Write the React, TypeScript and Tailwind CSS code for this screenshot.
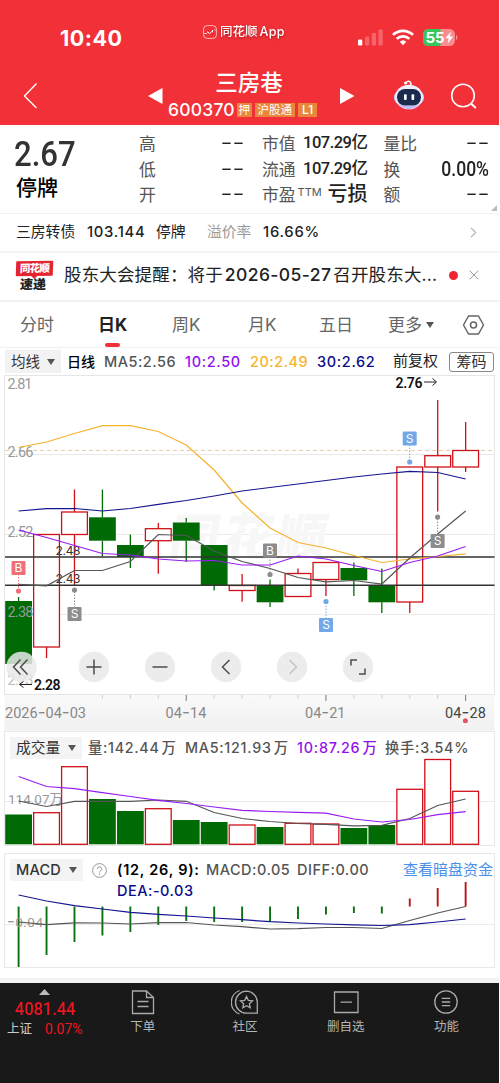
import React from "react";
import { ChevronRight, X } from "lucide-react";

const RED = "#d01018";
const GREEN = "#006b05";
const STEP = 27.94;
const px = (i: number) => 18.6 + i * STEP;

interface Candle {
  top: number;
  bottom: number;
  high: number;
  low: number;
  up: boolean;
}

const candle = (
  top: number,
  bottom: number,
  high: number,
  low: number,
  up: boolean
): Candle => ({ top, bottom, high, low, up });

const candles: Candle[] = [
  candle(601, 664, 597, 664, false),
  candle(534.5, 647, 534.5, 658, true),
  candle(512, 534.5, 489.5, 585, true),
  candle(517.3, 540.7, 489.5, 556.5, false),
  candle(545, 557, 534.5, 568, false),
  candle(528.7, 540.7, 523, 573.7, true),
  candle(522.5, 540.7, 518, 562, false),
  candle(545, 585, 545, 590.5, false),
  candle(585.5, 590.5, 574, 601.7, true),
  candle(585, 602.3, 579.5, 607, false),
  candle(573.5, 596.5, 568.5, 596.5, true),
  candle(562.5, 579.5, 562.5, 596, true),
  candle(568, 580.3, 562.5, 596, false),
  candle(585, 602.3, 568.5, 613, false),
  candle(467, 602, 467, 613, true),
  candle(455.7, 467, 400, 511.5, true),
  candle(450.5, 467, 422, 472, true),
];

const ma5 = [584.3, 585.8, 570.5, 570.5, 561.5, 534.5, 535.5, 551, 561.5, 568.5, 577.5, 581.8, 580.5, 584, 558, 534, 511];
const ma10 = [530, 537.5, 545.5, 553.5, 555, 559, 561, 560.5, 565, 565, 556, 559, 565.5, 571.5, 562.5, 556, 546.5];
const ma20 = [447.5, 442, 433.5, 425.7, 425.7, 431.5, 445, 470, 503, 528, 542.5, 548, 555.5, 562.5, 559, 556.5, 553.8];
const ma30 = [511, 508.7, 508.5, 511, 508.5, 504.3, 500.5, 496, 491, 487.5, 484, 480.5, 477, 474, 471.3, 472.5, 479];

const volumes = [814.5, 812.7, 766.7, 799, 811, 808.7, 820, 822, 825, 827, 823.3, 824, 828, 825, 789.3, 759.5, 791.3];
const volMa5 = [801, 806.5, 801.3, 801.3, 801.3, 800, 801.3, 812.5, 818.5, 821.5, 823.5, 824.3, 825.8, 825.3, 818.5, 805.5, 799];
const volMa10 = [776.5, 786.5, 788.7, 792.7, 796.5, 800.3, 803.5, 807, 810.3, 811.5, 812.3, 813.2, 819, 822, 819.5, 814.7, 811.7];

const macd = [967, 955, 942, 935.5, 932, 925, 921, 922, 922, 922, 919, 914.5, 913, 913.5, 898.5, 888, 882];
const dea = [895, 901, 905.7, 909, 912.3, 914.3, 916, 918, 919.7, 921.7, 923, 924, 924.8, 925.5, 924.7, 922, 919];
const diff = [922, 924.7, 922.8, 923, 924, 922.7, 922.5, 925, 926.7, 929, 928.7, 927.5, 927.5, 928.5, 920.5, 913, 906.5];

const SANS = "font-['Inter','Noto_Sans_CJK_SC',sans-serif]";
const DIN = "font-['Roboto','Noto_Sans_CJK_SC',sans-serif]";

export default function App() {
  return (
    <div
      className={`w-[499px] h-[1083px] overflow-hidden bg-white text-[#222] whitespace-nowrap ${SANS}`}
    >
      <StatusBar />
      <NavBar />
      <Quote />
      <BondRow />
      <NewsRow />
      <Tabs />
      <MaRow />
      <KLineChart />
      <VolumePanel />
      <MacdPanel />
      <div className="h-2.5" />
      <div className="h-[5px] bg-[#f3f3f3]" />
      <BottomBar />
    </div>
  );
}

/* ------------------ Header ------------------ */

function StatusBar() {
  return (
    <div className="h-[62px] bg-[#f23038] text-white flex items-start">
      <span className="ml-[60px] mt-[24px] w-[143px] text-[21.5px] leading-7 font-bold tracking-[0.5px]">
        10:40
      </span>
      <div className="mt-[24px] flex items-center gap-[3px] w-[155px] h-4">
        <svg width="14" height="14" viewBox="0 0 14 14" fill="none" stroke="#fff">
          <rect x="0.6" y="0.6" width="12.8" height="12.8" rx="3.5" strokeWidth="0.8" opacity="0.8" />
          <path d="M1.5 8.5h2l1-1M4.5 6.5l2 2.3 2.5-2.6M9.5 5v2.2M11.5 4.5l1 1" strokeWidth="1" />
        </svg>
        <span className="text-[12.5px] leading-4 font-medium drop-shadow-[0_1px_1px_rgba(90,0,0,0.5)]">
          同花顺<span className="ml-[2px] tracking-[0.3px]">App</span>
        </span>
      </div>
      <svg className="mt-[28px]" width="100" height="19" viewBox="358 28 100 19">
        <g fill="#fff">
          <rect x="358" y="39.5" width="4.3" height="6" rx="1.2" />
          <g opacity="0.25">
            <rect x="365" y="36.5" width="4.3" height="9" rx="1.2" />
            <rect x="371.8" y="33" width="4.3" height="12.5" rx="1.2" />
            <rect x="378.5" y="29.5" width="4.3" height="16" rx="1.2" />
          </g>
          <path d="M403 45.3l-3.3-3.5a4.8 4.8 0 0 1 6.6 0z" />
        </g>
        <g fill="none" stroke="#fff" strokeWidth="2.7">
          <path d="M396.7 38.9a9 9 0 0 1 12.6 0" />
          <path d="M393 34.9a14.2 14.2 0 0 1 20 0" />
        </g>
        <rect x="423" y="29" width="32" height="17" rx="5.5" fill="#f98d92" />
        <path d="M440.5 29h-12a5.5 5.5 0 0 0-5.5 5.5v6a5.5 5.5 0 0 0 5.5 5.5h12z" fill="#35c759" />
        <path d="M456 35v5c2-.8 2-4.2 0-5z" fill="#f98d92" />
        <text x="425.5" y="43" fill="#fff" fontSize="15" fontWeight="700" fontFamily="Inter" textLength="19">
          55
        </text>
        <path d="M451 31.5l-5.5 6.7h3.2l-1 5.3 5.5-6.9h-3.3z" fill="#fff" />
      </svg>
    </div>
  );
}

function NavBar() {
  return (
    <div className="h-[63px] bg-[#f23038] text-white flex">
      <svg className="ml-[22px] mt-[20px]" width="18" height="28" viewBox="0 0 18 28" fill="none" stroke="#fff" strokeWidth="1.4">
        <path d="M14.5 1.5 2.5 14l12 12" />
      </svg>
      <svg className="ml-[107px] mt-[26px]" width="17" height="16" viewBox="0 0 17 16" fill="#fff">
        <path d="M15.5 0v16L1 8z" />
      </svg>
      <div className="ml-[4px] mt-[7px] w-[151px]">
        <div className="text-[22.5px] leading-[28px] text-center pl-[11px] font-medium">
          三房巷
        </div>
        <div className="flex items-center h-[26px]">
          <span className="w-[68px] text-[17.5px] font-medium tracking-[0.2px]">600370</span>
          <span className="ml-[1px] bg-[#e8873c] text-[11.5px] leading-[14px] px-[1.5px]">押</span>
          <span className="ml-[3px] bg-[#e8873c] text-[11.5px] leading-[14px] px-[3px]">沪股通</span>
          <span className="ml-[3px] bg-[#e8873c] text-[12px] leading-[14px] px-[4px] font-medium">L1</span>
        </div>
      </div>
      <svg className="ml-[20px] mt-[26px]" width="17" height="16" viewBox="0 0 17 16" fill="#fff">
        <path d="M1 0v16l14.5-8z" />
      </svg>
      <svg className="ml-[36px] mt-[17px]" width="34" height="32" viewBox="0 0 34 32">
        <path d="M14 4c2-3 5-2 5 2" fill="none" stroke="#fff" strokeWidth="1.5" />
        <circle cx="13.5" cy="4" r="1.5" fill="#fff" />
        <rect x="2" y="12" width="30" height="13" rx="6" fill="#bfd0fb" />
        <ellipse cx="17" cy="18" rx="13.8" ry="12.3" fill="#f1f1ff" />
        <path d="M6 24c5 8 17 8 22 0-5 4-17 4-22 0z" fill="#c1b9fa" />
        <rect x="5" y="10" width="24" height="16.5" rx="8" fill="#1c2a4e" />
        <rect x="12" y="15.2" width="2.7" height="5.8" rx="1" fill="#fff" />
        <rect x="19.5" y="15.2" width="2.7" height="5.8" rx="1" fill="#fff" />
      </svg>
      <svg className="ml-[24px] mt-[20px]" width="28" height="28" viewBox="0 0 28 28" fill="none" stroke="#fff" strokeWidth="1.6">
        <circle cx="13" cy="13.5" r="11.3" />
        <path d="m21 21.5 4.8 4.5" strokeWidth="2" />
      </svg>
    </div>
  );
}

/* ------------------ Quote ------------------ */

interface QuoteItemProps {
  label: React.ReactNode;
  value: string;
  valueClass?: string;
}

const QuoteItem: React.FC<QuoteItemProps> = ({ label, value, valueClass }) => (
  <div className="flex items-center justify-between h-[25.7px]">
    <span className="text-[16.8px] leading-[24px] text-[#555]">{label}</span>
    {value === "--" ? (
      <span className="text-[18px] leading-[20px] -mt-[2px] origin-right scale-x-[1.45]">--</span>
    ) : (
      <span className={`${DIN} font-medium ${valueClass}`}>{value}</span>
    )}
  </div>
);

function Quote() {
  return (
    <div className="relative h-[89px] flex border-b border-[#f1f1f1]">
      <div className="ml-[14px] w-[125px] pt-[10px]">
        <div className={`${DIN} text-[35px] leading-[40px] font-medium text-[#333] origin-left scale-x-[0.89]`}>
          2.67
        </div>
        <div className="ml-[2px] -mt-px text-[21px] leading-[28px] font-medium text-black">
          停牌
        </div>
      </div>
      <div className="w-[106px] pt-[6px]">
        <QuoteItem label="高" value="--" />
        <QuoteItem label="低" value="--" />
        <QuoteItem label="开" value="--" />
      </div>
      <div className="ml-[17px] w-[105.5px] pt-[6px]">
        <QuoteItem label="市值" value="107.29亿" valueClass="text-[16.5px] tracking-[-0.5px]" />
        <QuoteItem label="流通" value="107.29亿" valueClass="text-[16.5px] tracking-[-0.5px]" />
        <QuoteItem
          label={
            <>
              市盈<sup className="text-[11px] ml-[2px] top-[-5px]">TTM</sup>
            </>
          }
          value="亏损"
          valueClass="text-[20px] leading-[24px] -mt-[2px]"
        />
      </div>
      <div className="ml-[16px] w-[106px] pt-[6px]">
        <QuoteItem label="量比" value="--" />
        <QuoteItem label="换" value="0.00%" valueClass="text-[19.5px] leading-[22px] origin-right scale-x-[0.9]" />
        <QuoteItem label="额" value="--" />
      </div>
      <svg className="absolute right-[2px] bottom-[2px]" width="6" height="6" viewBox="0 0 6 6">
        <path d="M6 0v6H0z" fill="#bbb" />
      </svg>
    </div>
  );
}

function BondRow() {
  return (
    <div className="h-[39px] flex items-center text-[14.8px] border-b-2 border-[#f3f3f3]">
      <span className="ml-[16px] w-[71px]">三房转债</span>
      <span className="w-[69px] font-medium tracking-[0.7px]">103.144</span>
      <span className="w-[51px]">停牌</span>
      <span className="w-[56px] text-[#999]">溢价率</span>
      <span className="w-[202px] font-medium tracking-[0.75px]">16.66%</span>
      <ChevronRight size={17} strokeWidth={1.8} className="text-[#bbb]" />
    </div>
  );
}

function NewsRow() {
  return (
    <div className="h-[49px] flex items-center border-b-2 border-[#f0f0f0]">
      <div className="ml-[16px] w-[48px] flex flex-col items-start">
        <span className="relative -skew-x-3 -rotate-1 rounded-[1px] bg-[#e3252f] text-white text-[10.5px] leading-[15px] w-[37px] text-center font-black tracking-[-0.7px]">
          同花顺
          <i className="absolute left-[16px] -bottom-[2px] w-[5px] h-[5px] rotate-45 bg-[#e3252f]" />
        </span>
        <span className="-skew-x-3 ml-[4px] text-[13px] leading-[16px] font-black">速递</span>
      </div>
      <span className="w-[385px] text-[17.5px] tracking-[0.15px] -mt-[2px]">
        股东大会提醒：将于
        <span className="mx-[2px] font-medium tracking-[0.4px]">2026-05-27</span>
        召开股东大...
      </span>
      <span className="w-[9px] h-[9px] rounded-full bg-[#ee2530] -mt-[3px]" />
      <X size={16} strokeWidth={1.5} className="ml-[8px] -mt-[4px] text-[#999]" />
    </div>
  );
}

function Tabs() {
  return (
    <div className="h-[46px] flex items-center text-[17px] text-[#666] border-b border-[#f0f0f0]">
      <span className="ml-[20px] w-[78px] pt-[2px]">分时</span>
      <span className="relative w-[74px] pt-[2px] font-bold text-[#222]">
        日K
        <i className="absolute left-[7px] top-[32px] w-[15px] h-[4px] rounded-full bg-[#f23038]" />
      </span>
      <span className="w-[76px] pt-[2px]">周K</span>
      <span className="w-[71px] pt-[2px]">月K</span>
      <span className="w-[69px] pt-[2px]">五日</span>
      <span className="pt-[2px]">更多</span>
      <Caret className="ml-[4px]" />
      <svg className="ml-[28px]" width="23" height="22" viewBox="0 0 23 22" fill="none" stroke="#666" strokeWidth="1.5">
        <path d="M6.5 2h10l5 9-5 9h-10l-5-9z" strokeLinejoin="round" />
        <circle cx="11.5" cy="11" r="3" />
      </svg>
    </div>
  );
}

const Caret = ({ className = "" }: { className?: string }) => (
  <svg className={className} width="8" height="6" viewBox="0 0 8 6">
    <path d="M0 0h8L4 6z" fill="#555" />
  </svg>
);

function MaRow() {
  return (
    <div className="h-[27px] flex items-center text-[14.5px] font-medium text-[#555]">
      <div className="ml-[5px] w-[56px] h-[23px] bg-[#f2f2f2] flex items-center text-[#333] font-normal">
        <span className="ml-[6px] w-[36px]">均线</span>
        <Caret />
      </div>
      <span className="ml-[6px] w-[37px] text-[14px] text-black">日线</span>
      <span className="w-[81px] tracking-[0.5px]">MA5:2.56</span>
      <span className="w-[65px] tracking-[0.65px] text-[#9310ee]">10:2.50</span>
      <span className="w-[67px] tracking-[0.5px] text-[#f5b32e]">20:2.49</span>
      <span className="w-[76px] tracking-[0.65px] text-[#0c0c8c]">30:2.62</span>
      <span className="w-[56px] font-normal text-[15px] text-[#222]">前复权</span>
      <span className="w-[45px] h-[20px] border border-[#888] rounded-[3px] text-center leading-[18px] text-[15px] font-normal text-[#333]">
        筹码
      </span>
    </div>
  );
}

/* ------------------ Charts ------------------ */

interface CurveProps {
  data: number[];
  color: string;
}

const Curve: React.FC<CurveProps> = ({ data, color }) => (
  <polyline
    points={data.map((y, i) => `${px(i)},${y}`).join(" ")}
    fill="none"
    stroke={color}
    strokeWidth="1.2"
  />
);

interface MarkProps {
  x: number;
  y: number;
  dot: number;
  color: string;
  text: string;
}

// buy / sell flag tied to its candle by a dotted stem
const Mark: React.FC<MarkProps> = ({ x, y, dot, color, text }) => (
  <g>
    <path d={`M${x} ${y}V${dot}`} stroke={color} strokeDasharray="1.5 1.5" />
    <circle cx={x} cy={dot} r="2.6" fill={color} />
    <rect x={x - 7} y={y - 7} width="14" height="14" rx="1" fill={color} />
    <text x={x} y={y + 4.3} fill="#fff" fontSize="12" textAnchor="middle" fontFamily="Inter">
      {text}
    </text>
  </g>
);

const controls = [
  { x: 21.5, d: "M-1 -7.5-8 0l7 7.5M6 -7.5-1 0l7 7.5" },
  { x: 94, d: "M-7.5 0h15M0 -7.5v15" },
  { x: 160, d: "M-7.5 0h15" },
  { x: 226, d: "M3.5 -7-3.5 0l7 7" },
  { x: 292, d: "M-2.5 -7 4.5 0l-7 7", off: true },
  { x: 358, d: "M-7 -1.5v-5.5h6M7 1.5v5.5h-6" },
];

const dates = [
  { x: 5, w: 81, text: "2026-04-03" },
  { x: 165.5, w: 41, text: "04-14" },
  { x: 305, w: 40.5, text: "04-21" },
  { x: 445, w: 41, text: "04-28", active: true },
];

function KLineChart() {
  return (
    <svg className="block" width="499" height="356" viewBox="0 375 499 356" fontFamily="Roboto">
      <defs>
        <linearGradient id="axis" x1="0" y1="0" x2="0" y2="1">
          <stop offset="0" stopColor="#f9f9f9" />
          <stop offset="1" stopColor="#f1f1f1" />
        </linearGradient>
      </defs>
      <rect x="4.5" y="694.5" width="490" height="36" fill="url(#axis)" />
      <path d="M4.5 694.5V375.5h490v319z" fill="none" stroke="#e6e6e6" />
      <path d="M5 454.5h489M5 534.5h489M5 614.5h489" stroke="#ebebeb" />
      <text
        x="167"
        y="555"
        fontSize="50"
        fontWeight="900"
        fill="#f7f7f7"
        fontFamily="Noto Sans CJK SC"
        textLength="157"
        transform="translate(98 0) skewX(-10)"
      >
        同花顺
      </text>
      <path d="M5 450.5h489" stroke="#e8cfae" strokeDasharray="4 3" />

      {candles.map((c, i) => {
        const color = c.up ? RED : GREEN;
        return (
          <g key={i} stroke={color} strokeWidth="1.3">
            <path d={`M${px(i)} ${c.high}V${c.top}M${px(i)} ${c.bottom}V${c.low}`} />
            {c.up ? (
              <rect x={px(i) - 12.9} y={c.top} width="25.8" height={c.bottom - c.top} fill="#fff" />
            ) : (
              <rect x={px(i) - 13.4} y={c.top} width="26.8" height={c.bottom - c.top} fill={color} stroke="none" />
            )}
          </g>
        );
      })}

      <g fontSize="14.5" fill="#999">
        <text x="7.5" y="389" textLength="25">2.81</text>
        <text x="7.5" y="457" textLength="26">2.66</text>
        <text x="7.5" y="537" textLength="26">2.52</text>
        <text x="7.5" y="617" textLength="26">2.38</text>
        <text x="7.5" y="684.5" textLength="26" fill="#bbb">2.23</text>
      </g>

      <path d="M5 557h489.5M5 585.2h489.5" stroke="#333" strokeWidth="1.5" />
      <g fontFamily="Inter" fontSize="12" fill="#333">
        <text x="55.5" y="554.5" textLength="25">2.48</text>
        <text x="55.5" y="582.5" textLength="25">2.43</text>
      </g>

      <Curve data={ma20} color="#f5b32e" />
      <Curve data={ma30} color="#15158f" />
      <Curve data={ma5} color="#555" />
      <Curve data={ma10} color="#9a1cf5" />

      <Mark x={18.5} y={568} dot={591} color="#ef6f78" text="B" />
      <Mark x={74.5} y={614} dot={590} color="#8c8c8c" text="S" />
      <Mark x={270} y={550.5} dot={574.5} color="#8c8c8c" text="B" />
      <Mark x={326} y={625} dot={601.5} color="#72a8e8" text="S" />
      <Mark x={409.7} y={438.5} dot={462} color="#72a8e8" text="S" />
      <Mark x={437.6} y={541} dot={517} color="#8c8c8c" text="S" />

      <text x="395.5" y="387.5" fontSize="14" fontWeight="600" fill="#111" textLength="27">2.76</text>
      <path d="M424 382h12M432.5 378.5l4 3.5-4 3.5" fill="none" stroke="#222" />

      {controls.map((c) => (
        <g key={c.x} transform={`translate(${c.x} 667)`}>
          <circle r="15.2" fill="#e9e9e9" opacity="0.85" />
          <path d={c.d} fill="none" stroke={c.off ? "#c4c4c4" : "#4c4c4c"} strokeWidth="1.5" />
        </g>
      ))}
      <text x="34" y="689.5" fontSize="14" fontWeight="600" fill="#111" textLength="26.5">2.28</text>
      <path d="M32 684.5H20M23.5 681.5l-4 3 4 3" fill="none" stroke="#222" />

      {candles.map((_, i) =>
        i < 3 ? null : (
          <path
            key={i}
            d={`M${px(i)} 695v${i % 5 === 1 ? 6 : 3.5}`}
            stroke={i % 5 === 1 ? "#777" : "#ccc"}
          />
        )
      )}
      {dates.map((d) => (
        <text key={d.text} x={d.x} y="717.5" fontSize="14.5" fill={d.active ? "#444" : "#888"} textLength={d.w}>
          {d.text.split("-").map((part, i) => (
            <React.Fragment key={i}>
              {i > 0 && <tspan fontFamily="Inter" fontSize="17">-</tspan>}
              {part}
            </React.Fragment>
          ))}
        </text>
      ))}
      <circle cx="465.4" cy="720.8" r="2.5" fill="#e35560" />
    </svg>
  );
}

function VolumePanel() {
  return (
    <div className="mx-[4px] h-[115px] border border-[#e8e8e8]">
      <div className="h-[32px] flex items-center text-[14.3px] font-medium text-[#555]">
        <div className="ml-[5px] w-[72px] h-[22px] bg-[#f4f4f4] flex items-center text-[#333] font-normal text-[14.8px]">
          <span className="ml-[6px] w-[52px]">成交量</span>
          <Caret />
        </div>
        <span className="ml-[6px] w-[97px] tracking-[0.7px]">
          量:142.44<span className="ml-[2px]">万</span>
        </span>
        <span className="w-[112px] tracking-[0.75px]">
          MA5:121.93<span className="ml-[2px]">万</span>
        </span>
        <span className="w-[88px] tracking-[0.8px] text-[#9310ee]">
          10:87.26<span className="ml-[2px]">万</span>
        </span>
        <span className="tracking-[0.75px]">换手:3.54%</span>
      </div>
      {/* tall bars reach up under the legend */}
      <svg className="block -mt-[6px]" width="490" height="87" viewBox="5 758 490 87">
        <path d="M5 801.5h490" stroke="#ebebeb" />
        {volumes.map((y, i) => (
          <rect
            key={i}
            x={px(i) - (candles[i].up ? 12.9 : 13.4)}
            y={y}
            width={candles[i].up ? 25.8 : 26.8}
            height={844.3 - y}
            fill={candles[i].up ? "#fff" : GREEN}
            stroke={candles[i].up ? RED : "none"}
            strokeWidth="1.3"
          />
        ))}
        <text x="8" y="804" fontSize="13.5" fill="#999" fontFamily="Roboto, Noto Sans CJK SC" textLength="55">
          114.07万
        </text>
        <Curve data={volMa5} color="#555" />
        <Curve data={volMa10} color="#9a1cf5" />
      </svg>
    </div>
  );
}

function MacdPanel() {
  return (
    <div className="mx-[4px] mt-[7px] h-[115px] border border-[#e8e8e8]">
      <div className="h-[27px] pt-[5px] flex items-center text-[14.5px] font-medium text-[#555]">
        <div className="ml-[5px] w-[73px] h-[22px] bg-[#f4f4f4] flex items-center text-[#333]">
          <span className="ml-[6px] w-[53px] tracking-[0.2px]">MACD</span>
          <Caret />
        </div>
        <svg className="ml-[9px]" width="15" height="15" viewBox="0 0 15 15" fill="none" stroke="#999">
          <circle cx="7.5" cy="7.5" r="6.9" />
          <path d="M5.3 6a2.2 2.2 0 1 1 3.3 1.9c-.8.5-1.1.8-1.1 1.6M7.5 10.600v1.2" />
        </svg>
        <span className="ml-[10px] w-[89px] text-black font-semibold tracking-[0.75px]">(12, 26, 9):</span>
        <span className="w-[91px] tracking-[0.5px]">MACD:0.05</span>
        <span className="w-[106px] tracking-[0.5px]">DIFF:0.00</span>
        <span className="text-[15px] font-normal text-[#4a90e8]">查看暗盘资金</span>
      </div>
      <div className="ml-[112px] h-0 text-[14.5px] leading-[19px] font-medium tracking-[0.5px] text-[#0c0c8c]">
        DEA:-0.03
      </div>
      <svg className="block" width="490" height="86" viewBox="5 881 490 86">
        <path d="M5 924.5h490" stroke="#ebebeb" />
        {macd.map((y, i) => (
          <path
            key={i}
            d={`M${px(i)} 906.5V${y}`}
            stroke={y < 906 ? "#c01018" : "#0b7010"}
            strokeWidth="1.9"
          />
        ))}
        <text x="7" y="926.5" fontSize="13.5" fill="#999" fontFamily="Roboto" textLength="36">
          <tspan fontFamily="Inter" fontSize="17">-</tspan>0.04
        </text>
        <Curve data={diff} color="#555" />
        <Curve data={dea} color="#15158f" />
      </svg>
    </div>
  );
}

/* ------------------ Bottom bar ------------------ */

interface BarItemProps {
  label: string;
  className: string;
  children: React.ReactNode;
}

const BarItem: React.FC<BarItemProps> = ({ label, className, children }) => (
  <div className={`flex flex-col items-center ${className}`}>
    <svg width="28" height="26" viewBox="0 0 28 26" fill="none" stroke="#aaa" strokeWidth="1.3">
      {children}
    </svg>
    <span className="mt-[3px] text-[12.5px] leading-[18px] text-[#b5b5b5]">{label}</span>
  </div>
);

function BottomBar() {
  return (
    <div className="h-[100px] bg-[#191919] pt-[6px] flex items-start">
      <div className="w-[94px] flex flex-col items-center">
        <svg className="-ml-[4px]" width="11" height="6" viewBox="0 0 11 6">
          <path d="M5.5 0 11 6H0z" fill="#bbb" />
        </svg>
        <span className={`${DIN} mt-[4px] pr-[3px] text-[17.5px] leading-[20px] font-medium text-[#ee1520] scale-x-[0.94]`}>
          4081.44
        </span>
        <div className="w-full flex leading-[20px]">
          <span className="ml-[7px] w-[38px] text-[12.5px] text-[#ccc]">上证</span>
          <span className={`${DIN} text-[14px] text-[#ee1520]`}>0.07%</span>
        </div>
      </div>
      <BarItem label="下单" className="w-[100px]">
        <path d="M3.5 2h14l7 6.5V24.5h-21zM17.5 2v6.5h7M8.5 12.5h11M8.5 17.5h11" />
      </BarItem>
      <BarItem label="社区" className="w-[106px]">
        <path d="M15.5 2.2a11 11 0 1 0 0 22H26.3V13a11 11 0 0 0-10.8-10.8zM8.5 1.5a12.5 12.5 0 0 0 0 23.5" />
        <path d="m15.5 7.5 1.8 3.8 4.2.5-3.1 2.9.8 4.1-3.7-2-3.7 2 .8-4.1-3.1-2.9 4.2-.5z" />
      </BarItem>
      <BarItem label="删自选" className="w-[97px]">
        <path d="M2.5 3h23.5v20.5H2.5zM8.5 13.2h11.5" />
      </BarItem>
      <BarItem label="功能" className="w-[106px]">
        <circle cx="14" cy="13" r="11.2" />
        <path d="M9.8 9.3h8.4M9.8 13h8.4M9.8 16.7h8.4" />
      </BarItem>
    </div>
  );
}
